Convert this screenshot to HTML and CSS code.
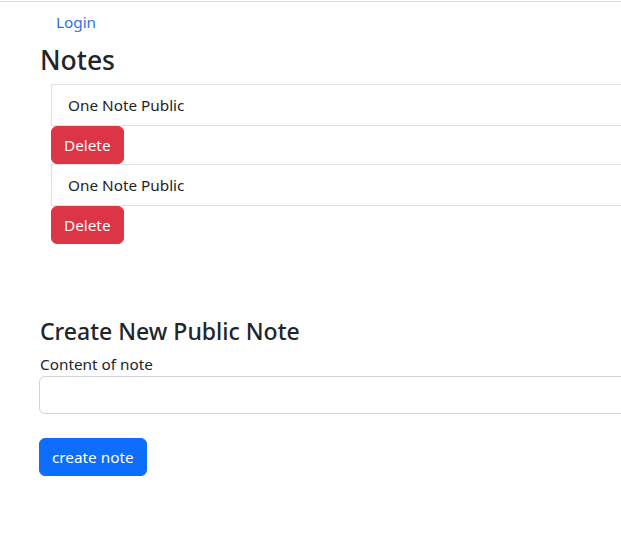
FILE: index.html
```html
<!DOCTYPE html>
<html lang="en">
<head>
    <meta charset="UTF-8">
    <meta name="viewport" content="width=device-width, initial-scale=1.0">
    <title>Notes</title>
    <link rel="stylesheet" href="styles.css">
</head>
<body>
    <nav class="topnav">
        <a class="nav-link" href="#">Login</a>
    </nav>
    <div class="container">
        <h1>Notes</h1>
        <ul class="note-list">
            <li>
                <div class="note-item">One Note Public</div>
                <button class="btn btn-danger">Delete</button>
            </li>
            <li>
                <div class="note-item">One Note Public</div>
                <button class="btn btn-danger">Delete</button>
            </li>
        </ul>

        <h3 class="create-title">Create New Public Note</h3>
        <form class="note-form">
            <label for="content">Content of note</label>
            <input type="text" id="content" class="form-control">
            <button type="button" class="btn btn-primary">create note</button>
        </form>
    </div>
</body>
</html>
```

FILE: styles.css
```css
html {
    overflow: hidden;
}
body {
    margin: 0;
    min-width: 1000px;
    font-family: "Noto Sans", "Segoe UI", sans-serif;
    font-size: 15.3px;
    line-height: 24px;
    color: #212529;
    background: #fff;
}
.topnav {
    margin-top: 1px;
    border-top: 1px solid #dedede;
    padding: 0 40px;
    display: flex;
}
.nav-link {
    display: block;
    padding: 8px 16px;
    color: #2f73e0;
    text-decoration: none;
}
.container {
    padding: 0 40px;
}
h1 {
    margin: 0 0 6px;
    font-size: 26.5px;
    font-weight: 500;
    line-height: 36px;
}
.note-list {
    list-style: none;
    margin: 0 0 0 11px;
    padding: 0;
}
.note-item {
    padding: 8px 16px;
    border: 1px solid #dee2e6;
}
.btn {
    display: inline-block;
    box-sizing: border-box;
    height: 38px;
    padding: 6px 12px;
    font-family: inherit;
    font-size: 15.3px;
    line-height: 24px;
    border: 1px solid transparent;
    border-radius: 6px;
    color: #fff;
    cursor: pointer;
}
.btn-danger {
    display: block;
    background-color: #dc3545;
    border-color: #dc3545;
}
.btn-primary {
    background-color: #0d6efd;
    border-color: #0d6efd;
}
.create-title {
    margin: 72px 0 6px;
    font-size: 23px;
    font-weight: 500;
    line-height: 30px;
}
.note-form label {
    display: block;
}
.form-control {
    display: block;
    box-sizing: border-box;
    width: 100%;
    height: 38px;
    margin: 0 0 24px -1px;
    padding: 6px 12px;
    font-family: inherit;
    font-size: 16px;
    border: 1px solid #ced4da;
    border-radius: 6px;
}
.note-form .btn-primary {
    margin-left: -1px;
}
```
